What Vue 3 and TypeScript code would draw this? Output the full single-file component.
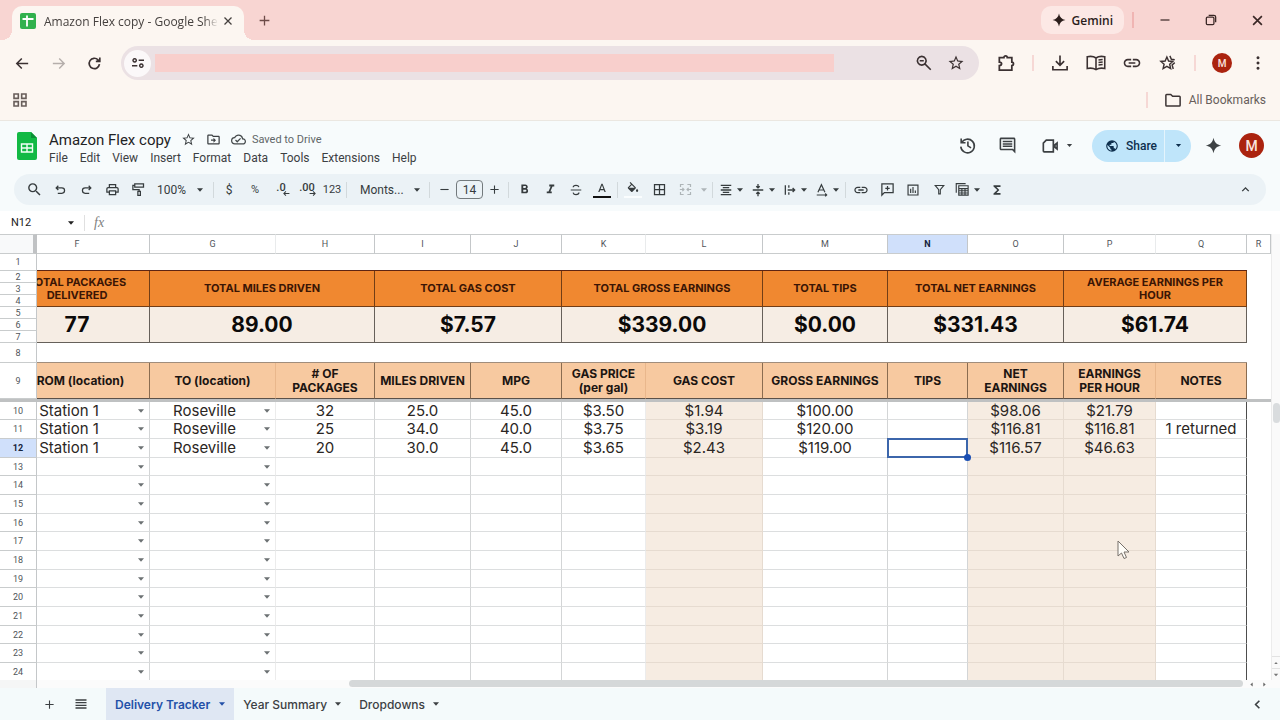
<script setup lang="ts">
import { h, ref } from 'vue'

interface Glyph { d: string; s?: number }

const glyphs: Record<string, Glyph> = {
  back: { d: 'M20 12H4M11 5l-7 7 7 7', s: 2.2 },
  forward: { d: 'M4 12h16M13 5l7 7-7 7', s: 2 },
  reload: { d: 'M19 13a7.3 7.3 0 1 1-2-6.200L19 8.600M19.500 3.500v5.600h-5.600', s: 2.4 },
  tune: { d: 'M7 5.500a2.500 2.500 0 1 0 .01 0zM13 8h8M3 16h8M17 13.500a2.500 2.500 0 1 0 .01 0z', s: 2.2 },
  grid: { d: 'M3 3h6.500v6.500H3zM14.500 3H21v6.500h-6.500zM3 14.500h6.500V21H3zM14.500 14.500H21V21h-6.500z', s: 2.4 },
  close: { d: 'M5 5l14 14M19 5L5 19', s: 2.6 },
  plus: { d: 'M12 3v18M3 12h18', s: 2.4 },
  minus: { d: 'M3 12h18', s: 2.4 },
  restore: { d: 'M4 9a2 2 0 0 1 2-2h9a2 2 0 0 1 2 2v9a2 2 0 0 1-2 2H6a2 2 0 0 1-2-2zM8 4h9a3 3 0 0 1 3 3v9', s: 2.2 },
  spark: { d: 'M12 1c1.200 6.500 4.500 9.800 11 11-6.500 1.200-9.800 4.500-11 11-1.200-6.500-4.500-9.800-11-11 6.500-1.200 9.800-4.500 11-11z' },
  search: { d: 'M15.500 14h-.79l-.28-.27A6.470 6.470 0 0 0 16 9.500 6.500 6.500 0 1 0 9.500 16c1.610 0 3.090-.59 4.230-1.570l.27.28v.79l5 4.990L20.490 19l-4.990-5zm-6 0C7.010 14 5 11.990 5 9.500S7.010 5 9.500 5 14 7.010 14 9.500 11.990 14 9.500 14z' },
  zoomOut: { d: 'M13.500 13.500L21 21M9 3.200a5.800 5.800 0 1 0 .01 0zM6.300 9h5.400', s: 2.1 },
  star: { d: 'M22 9.240l-7.190-.62L12 2 9.190 8.630 2 9.240l5.460 4.730L5.820 21 12 17.270 18.180 21l-1.630-7.030L22 9.240zM12 15.400l-3.760 2.270 1-4.280-3.320-2.880 4.380-.38L12 6.100l1.710 4.040 4.380.38-3.320 2.880 1 4.280L12 15.400z' },
  starPen: { d: 'M10.500 4l2.300 5.400 5.700.5-4.300 3.800 1.300 5.700-5-3-5 3 1.300-5.700L2.500 9.900l5.700-.5zM14.500 2.500l2 4.500 4.500.5M21 11.500l-3.500 3 1.500 5.500', s: 1.900 },
  puzzle: { d: 'M4 5.500h5.500a2 2 0 1 1 4 0H19V11a2 2 0 1 1 0 4v5.500H4V15c3.600 0 3.600-4 0-4z', s: 2.1 },
  download: { d: 'M12 2v13M6.500 9.500L12 15l5.500-5.500M2.500 16v5h19v-5', s: 2.2 },
  book: { d: 'M12 6C9 3.800 5 3.800 1.500 4.500v14C5 17.800 9 18 12 20c3-2 7-2.200 10.500-1.500v-14C19 3.800 15 3.800 12 6zM12 6v14M15 8.500l5-.6M15 11.500l5-.6M15 14.500l5-.6', s: 1.900 },
  link: { d: 'M3.900 12c0-1.710 1.390-3.100 3.100-3.100h4V7H7c-2.760 0-5 2.240-5 5s2.240 5 5 5h4v-1.900H7c-1.710 0-3.100-1.390-3.100-3.100zM8 13h8v-2H8v2zm9-6h-4v1.900h4c1.710 0 3.100 1.390 3.100 3.100s-1.390 3.100-3.100 3.100h-4V17h4c2.760 0 5-2.240 5-5s-2.240-5-5-5z' },
  dots: { d: 'M12 3a2 2 0 1 0 .01 0zM12 10a2 2 0 1 0 .01 0zM12 17a2 2 0 1 0 .01 0z' },
  folder: { d: 'M2.500 5.500a1 1 0 0 1 1-1H9L11.500 7h9a1 1 0 0 1 1 1v11a1 1 0 0 1-1 1h-17a1 1 0 0 1-1-1z', s: 2 },
  folderMove: { d: 'M20 6h-8l-2-2H4c-1.100 0-2 .9-2 2v12c0 1.100.9 2 2 2h16c1.100 0 2-.9 2-2V8c0-1.100-.9-2-2-2zm0 12H4V6h5.170l2 2H20v10zM12 17l4-4-4-4v3H8v2h4z' },
  cloud: { d: 'M19.350 10.040A7.490 7.490 0 0 0 12 4C9.110 4 6.600 5.640 5.350 8.040A5.994 5.994 0 0 0 0 14c0 3.310 2.690 6 6 6h13c2.760 0 5-2.240 5-5 0-2.640-2.050-4.780-4.650-4.960zM19 18H6c-2.210 0-4-1.790-4-4 0-2.050 1.530-3.760 3.560-3.970l1.070-.11.5-.95A5.469 5.469 0 0 1 12 6c2.620 0 4.880 1.860 5.390 4.430l.3 1.500 1.530.11A2.980 2.980 0 0 1 22 15c0 1.650-1.350 3-3 3zm-9-3.820l-2.090-2.090L6.500 13.500 10 17l6.010-6.010-1.410-1.410z' },
  history: { d: 'M4 3v5.500h5.500M4.500 8.500a8.600 8.600 0 1 1-1 5M12.500 7v5.500l4 2.500', s: 2 },
  comment: { d: 'M22 4c0-1.100-.9-2-2-2H4c-1.100 0-2 .9-2 2v12c0 1.100.9 2 2 2h14l4 4V4zm-2 13.170L18.830 16H4V4h16v13.170zM6 12h12v2H6zm0-3h12v2H6zm0-3h12v2H6z' },
  meet: { d: 'M7.500 5H16v14H5a1 1 0 0 1-1-1V8.500zM18 10.500L20.500 8.500v7L18 13.500z', s: 2 },
  globe: { d: 'M12 2a10 10 0 1 0 0 20 10 10 0 0 0 0-20zm-1 17.930A8 8 0 0 1 4.210 10.210L9 15v1a2 2 0 0 0 2 2v1.930zm6.900-2.540A2 2 0 0 0 16 16h-1v-3a1 1 0 0 0-1-1H8v-2h2a1 1 0 0 0 1-1V7h2a2 2 0 0 0 2-2v-.41a8 8 0 0 1 2.900 12.800z' },
  undo: { d: 'M8 5L4 9l4 4M4 9h10.500a5 5 0 0 1 0 10H7', s: 2.3 },
  redo: { d: 'M16 5l4 4-4 4M20 9H9.500a5 5 0 0 0 0 10H17', s: 2.3 },
  print: { d: 'M19 8h-1V3H6v5H5c-1.660 0-3 1.340-3 3v6h4v4h12v-4h4v-6c0-1.660-1.340-3-3-3zM8 5h8v3H8V5zm8 12v2H8v-4h8v2zm2-2v-2H6v2H4v-4c0-.55.45-1 1-1h14c.55 0 1 .45 1 1v4h-2z' },
  roller: { d: 'M6 3h14v5H6zM6 5.500H3V12h10v3M11 15h4v6.500h-4z', s: 2 },
  bold: { d: 'M15.600 10.790c.97-.67 1.650-1.770 1.650-2.790 0-2.260-1.750-4-4-4H7v14h7.040c2.090 0 3.710-1.700 3.710-3.790 0-1.520-.86-2.820-2.150-3.420zM10 6.500h3c.83 0 1.500.67 1.500 1.500s-.67 1.500-1.500 1.500h-3v-3zm3.500 9H10v-3h3.500c.83 0 1.500.67 1.500 1.500s-.67 1.500-1.500 1.500z' },
  italic: { d: 'M10 4v3h2.210l-3.420 8H6v3h8v-3h-2.210l3.420-8H18V4z' },
  strike: { d: 'M3 12h18M17 7c-.6-2-2.500-3-5-3-2.700 0-4.800 1.200-4.800 3.300M7 16.500c.6 2.300 2.500 3.500 5 3.500 2.800 0 5-1.300 5-3.600', s: 2.1 },
  textColor: { d: 'M11 3L5.500 17h2.250l1.120-3h6.250l1.120 3h2.250L13 3h-2zm-1.380 9L12 5.670 14.380 12H9.620z' },
  fill: { d: 'M16.560 8.940L7.620 0 6.210 1.410l2.380 2.380-5.150 5.150a1.490 1.490 0 0 0 0 2.120l5.500 5.500c.29.29.68.44 1.060.44s.77-.15 1.060-.44l5.500-5.500c.59-.58.59-1.530 0-2.120zM5.210 10L10 5.210 14.790 10H5.210zM19 11.500s-2 2.170-2 3.500a2 2 0 0 0 4 0c0-1.330-2-3.500-2-3.500z' },
  borders: { d: 'M3 3v18h18V3H3zm8 16H5v-6h6v6zm0-8H5V5h6v6zm8 8h-6v-6h6v6zm0-8h-6V5h6v6z' },
  merge: { d: 'M9 4H4v4M15 4h5v4M9 20H4v-4M15 20h5v-4M3 12h6M7 9.500L9.500 12 7 14.500M21 12h-6M17 9.500L14.500 12l2.500 2.500', s: 1.900 },
  align: { d: 'M3 4h18M6.500 8h11M3 12h18M6.500 16h11M3 20h18', s: 2.2 },
  valign: { d: 'M3 12h18M12 1.500v6M9 5.500l3 3 3-3M12 22.500v-6M9 18.500l3-3 3 3', s: 2.2 },
  wrap: { d: 'M4 4v16M10 4v4M10 16v4M8 12h12M16.500 8.500L20 12l-3.500 3.500', s: 2.2 },
  rotate: { d: 'M5 16l6-13 6 13M7.500 12h7M3 20.500h17M17.500 18l2.500 2.500-2.500 2.500', s: 2 },
  addComment: { d: 'M3 3h18v14H7l-4 4zM12 6.500v7M8.500 10h7', s: 2 },
  chart: { d: 'M3.500 3.500h17v17h-17zM8 17v-7M12 17V7M16 17v-4', s: 2 },
  filter: { d: 'M4 4.500h16l-6.500 8V20h-3v-7.500z', s: 2 },
  tableViews: { d: 'M2 17V2.500h15M6 6h15v15H6zM6 10.500h15M6 14h15M6 17.500h15M11 10.500V21M16 10.500V21', s: 1.800 },
  sigma: { d: 'M18 4H6v2l6.500 6L6 18v2h12v-3h-7l5-5-5-5h7z' },
  up: { d: 'M6 15l6-6 6 6', s: 2.600 },
  left: { d: 'M15 6l-6 6 6 6', s: 2.600 },
  caret: { d: 'M3 7l9 10 9-10z' },
  caretUp: { d: 'M5 16l7-8 7 8z' },
  caretLeft: { d: 'M16 5l-8 7 8 7z' },
  caretRight: { d: 'M8 5l8 7-8 7z' },
  lines: { d: 'M1 4h22M1 9.300h22M1 14.700h22M1 20h22', s: 2.600 },
  arrowLeft: { d: 'M22 12H4M10 5l-7 7 7 7', s: 3.500 },
  arrowRight: { d: 'M2 12h18M14 5l7 7-7 7', s: 3.500 },
}

const Icon = (p: { n: string; size?: number }) => {
  const g = glyphs[p.n]
  const size = p.size ?? 16
  return h('svg', { width: size, height: size, viewBox: '0 0 24 24', 'aria-hidden': 'true' }, [
    g.s
      ? h('path', { d: g.d, fill: 'none', stroke: 'currentColor', 'stroke-width': g.s })
      : h('path', { d: g.d, fill: 'currentColor', 'fill-rule': 'evenodd' }),
  ])
}
Icon.props = ['n', 'size']

const menus = ['File', 'Edit', 'View', 'Insert', 'Format', 'Data', 'Tools', 'Extensions', 'Help']
const columns = [
  { id: 'F', w: 113 }, { id: 'G', w: 126 }, { id: 'H', w: 99 }, { id: 'I', w: 96 },
  { id: 'J', w: 91 }, { id: 'K', w: 84 }, { id: 'L', w: 117 }, { id: 'M', w: 125 },
  { id: 'N', w: 80 }, { id: 'O', w: 96 }, { id: 'P', w: 92 }, { id: 'Q', w: 91 }, { id: 'R', w: 24 },
]
const summary = [
  { label: 'TOTAL PACKAGES DELIVERED', value: '77', span: 1 },
  { label: 'TOTAL MILES DRIVEN', value: '89.00', span: 2 },
  { label: 'TOTAL GAS COST', value: '$7.57', span: 2 },
  { label: 'TOTAL GROSS EARNINGS', value: '$339.00', span: 2 },
  { label: 'TOTAL TIPS', value: '$0.00', span: 1 },
  { label: 'TOTAL NET EARNINGS', value: '$331.43', span: 2 },
  { label: 'AVERAGE EARNINGS PER HOUR', value: '$61.74', span: 2 },
]
const heads = ['FROM (location)', 'TO (location)', '# OF\nPACKAGES', 'MILES DRIVEN', 'MPG', 'GAS PRICE\n(per gal)', 'GAS COST', 'GROSS EARNINGS', 'TIPS', 'NET\nEARNINGS', 'EARNINGS\nPER HOUR', 'NOTES']
const filled: string[][] = [
  ['Station 1', 'Roseville', '32', '25.0', '45.0', '$3.50', '$1.94', '$100.00', '', '$98.06', '$21.79', ''],
  ['Station 1', 'Roseville', '25', '34.0', '40.0', '$3.75', '$3.19', '$120.00', '', '$116.81', '$116.81', '1 returned'],
  ['Station 1', 'Roseville', '20', '30.0', '45.0', '$3.65', '$2.43', '$119.00', '', '$116.57', '$46.63', ''],
]
const rows = Array.from({ length: 15 }, (_, i) => ({
  n: i + 10,
  cells: filled[i] ?? Array<string>(12).fill(''),
}))
const soft = [1, 5, 10]
const nameBox = ref('N12')
const fontSize = ref('14')
const address = ref('')
const formula = ref('')
</script>

<template>
  <div class="window">
    <header class="tabstrip">
      <div class="tab">
        <svg class="fav" viewBox="0 0 16 16" aria-hidden="true"><rect width="16" height="16" rx="2" fill="#31b14d" /><path d="M7 2.500v11M2.500 6h11" stroke="#fff" stroke-width="1.800" /></svg>
        <span class="tab-title">Amazon Flex copy - Google Sheets</span>
        <button aria-label="Close tab"><Icon n="close" :size="12" /></button>
      </div>
      <button class="newtab" aria-label="New tab"><Icon n="plus" :size="13" /></button>
      <span class="grow"></span>
      <button class="gemini"><Icon n="spark" :size="14" />Gemini</button>
      <span class="pink-sep"></span>
      <button class="win" aria-label="Minimize"><Icon n="minus" :size="12" /></button>
      <button class="win" aria-label="Restore"><Icon n="restore" :size="14" /></button>
      <button class="win" aria-label="Close"><Icon n="close" :size="15" /></button>
    </header>

    <nav class="nav">
      <button class="slot" aria-label="Back"><Icon n="back" :size="17" /></button>
      <button class="slot dim" aria-label="Forward"><Icon n="forward" :size="17" /></button>
      <button class="slot" aria-label="Reload"><Icon n="reload" :size="17" /></button>
      <div class="omnibox">
        <button class="site" aria-label="Site information"><Icon n="tune" /></button>
        <input v-model="address" class="address" aria-label="Address" />
        <button class="omni-btn" aria-label="Zoom"><Icon n="zoomOut" :size="18" /></button>
        <button class="omni-btn" aria-label="Bookmark"><Icon n="star" :size="18" /></button>
      </div>
      <button class="slot" aria-label="Browser extensions"><Icon n="puzzle" :size="20" /></button>
      <span class="pink-sep"></span>
      <button class="slot" aria-label="Downloads"><Icon n="download" :size="18" /></button>
      <button class="slot" aria-label="Reading list"><Icon n="book" :size="20" /></button>
      <button class="slot" aria-label="Copy link"><Icon n="link" :size="20" /></button>
      <button class="slot" aria-label="Bookmarks"><Icon n="starPen" :size="18" /></button>
      <span class="pink-sep"></span>
      <button class="slot" aria-label="Profile"><span class="avatar small">M</span></button>
      <button class="slot" aria-label="Browser menu"><Icon n="dots" :size="18" /></button>
    </nav>

    <div class="bookmarks">
      <button aria-label="Apps"><Icon n="grid" :size="16" /></button>
      <span class="grow"></span>
      <span class="pink-sep"></span>
      <button class="all"><Icon n="folder" :size="18" />All Bookmarks</button>
    </div>

    <section class="app-head">
      <svg class="logo" viewBox="0 0 20 28" aria-hidden="true">
        <path d="M2 0h12l6 6v20a2 2 0 0 1-2 2H2a2 2 0 0 1-2-2V2a2 2 0 0 1 2-2z" fill="#12b944" />
        <path d="M14 0l6 6h-6z" fill="#0a8f35" />
        <path d="M4.500 12h11v8h-11zM10 12v8M4.500 16h11" fill="none" stroke="#f2fff5" stroke-width="1.400" />
      </svg>
      <div class="doc">
        <div class="title-row">
          <h1>Amazon Flex copy</h1>
          <button aria-label="Star"><Icon n="star" :size="15" /></button>
          <button aria-label="Move"><Icon n="folderMove" :size="15" /></button>
          <span class="saved"><Icon n="cloud" :size="15" />Saved to Drive</span>
        </div>
        <div class="menus"><button v-for="m in menus" :key="m">{{ m }}</button></div>
      </div>
      <span class="grow"></span>
      <button class="head-btn" aria-label="Version history"><Icon n="history" :size="19" /></button>
      <button class="head-btn" aria-label="Comments"><Icon n="comment" :size="19" /></button>
      <button class="head-btn meet" aria-label="Meet"><Icon n="meet" :size="20" /><Icon n="caret" :size="7" /></button>
      <div class="share">
        <button class="share-main"><Icon n="globe" :size="14" />Share</button>
        <button class="share-more" aria-label="Share options"><Icon n="caret" :size="7" /></button>
      </div>
      <button class="gem" aria-label="Ask Gemini"><Icon n="spark" :size="17" /></button>
      <button aria-label="Account"><span class="avatar">M</span></button>
    </section>

    <div class="toolbar-wrap">
      <section class="toolbar">
        <button class="t" aria-label="Search"><Icon n="search" :size="17" /></button>
        <button class="t" aria-label="Undo"><Icon n="undo" :size="13" /></button>
        <button class="t" aria-label="Redo"><Icon n="redo" :size="13" /></button>
        <button class="t" aria-label="Print"><Icon n="print" :size="15" /></button>
        <button class="t" aria-label="Paint format"><Icon n="roller" :size="15" /></button>
        <label class="pick zoom"><select aria-label="Zoom level"><option>100%</option></select><Icon n="caret" :size="8" /></label>
        <i class="sep"></i>
        <button class="t">$</button>
        <button class="t num">%</button>
        <button class="t dec" aria-label="Decrease decimal places"><span>.0</span><Icon n="arrowLeft" :size="7" /></button>
        <button class="t dec" aria-label="Increase decimal places"><span>.00</span><Icon n="arrowRight" :size="7" /></button>
        <button class="t narrow num">123</button>
        <i class="sep"></i>
        <label class="pick font"><select aria-label="Font"><option>Monts...</option></select><Icon n="caret" :size="8" /></label>
        <i class="sep"></i>
        <button class="t narrow" aria-label="Decrease font size"><Icon n="minus" :size="11" /></button>
        <input v-model="fontSize" class="size" aria-label="Font size" />
        <button class="t narrow" aria-label="Increase font size"><Icon n="plus" :size="11" /></button>
        <i class="sep"></i>
        <button class="t" aria-label="Bold"><Icon n="bold" :size="15" /></button>
        <button class="t" aria-label="Italic"><Icon n="italic" :size="15" /></button>
        <button class="t" aria-label="Strikethrough"><Icon n="strike" :size="14" /></button>
        <button class="t under" aria-label="Text color"><Icon n="textColor" :size="14" /></button>
        <i class="sep"></i>
        <button class="t under white" aria-label="Fill color"><Icon n="fill" :size="14" /></button>
        <button class="t" aria-label="Borders"><Icon n="borders" :size="15" /></button>
        <button class="t faded" aria-label="Merge cells"><Icon n="merge" :size="15" /></button>
        <button class="c faded" aria-label="Merge options"><Icon n="caret" :size="8" /></button>
        <i class="sep"></i>
        <button class="duo" aria-label="Horizontal align"><Icon n="align" :size="14" /><Icon n="caret" :size="8" /></button>
        <button class="duo" aria-label="Vertical align"><Icon n="valign" :size="14" /><Icon n="caret" :size="8" /></button>
        <button class="duo" aria-label="Text wrapping"><Icon n="wrap" :size="14" /><Icon n="caret" :size="8" /></button>
        <button class="duo" aria-label="Text rotation"><Icon n="rotate" :size="14" /><Icon n="caret" :size="8" /></button>
        <i class="sep"></i>
        <button class="t" aria-label="Insert link"><Icon n="link" /></button>
        <button class="t" aria-label="Insert comment"><Icon n="addComment" :size="15" /></button>
        <button class="t" aria-label="Insert chart"><Icon n="chart" :size="14" /></button>
        <button class="t" aria-label="Create a filter"><Icon n="filter" :size="13" /></button>
        <button class="duo" aria-label="Table views"><Icon n="tableViews" :size="15" /><Icon n="caret" :size="8" /></button>
        <button class="t" aria-label="Functions"><Icon n="sigma" :size="14" /></button>
        <span class="grow"></span>
        <button class="t" aria-label="Hide the menus"><Icon n="up" :size="13" /></button>
      </section>
    </div>

    <section class="formula">
      <label class="namebox"><input v-model="nameBox" aria-label="Name box" /><Icon n="caret" :size="8" /></label>
      <span class="fx">fx</span>
      <input v-model="formula" class="fx-input" aria-label="Formula" />
    </section>

    <main class="sheet">
      <div class="pane">
        <table>
          <colgroup>
            <col class="gutter" />
            <col v-for="c in columns" :key="c.id" :style="{ width: c.w + 'px' }" />
          </colgroup>
          <thead>
            <tr class="letters">
              <th class="corner"></th>
              <th v-for="(c, i) in columns" :key="c.id" scope="col" :class="{ on: c.id === 'N', soft: soft.includes(i) }"><div :class="{ shift: i === 0 }">{{ c.id }}</div></th>
            </tr>
          </thead>
          <tbody class="frozen">
            <tr class="r1"><th scope="row">1</th><td colspan="12" class="line"></td><td></td></tr>
            <tr class="thin">
              <th scope="row">2</th>
              <td v-for="(s, i) in summary" :key="s.label" :colspan="s.span" rowspan="3" class="sum-label"><div :class="{ shift: i === 0 }">{{ s.label }}</div></td>
              <td></td>
            </tr>
            <tr class="thin"><th scope="row">3</th><td></td></tr>
            <tr class="thin"><th scope="row">4</th><td></td></tr>
            <tr class="thin">
              <th scope="row">5</th>
              <td v-for="(s, i) in summary" :key="s.label" :colspan="s.span" rowspan="3" class="sum-value"><div :class="{ shift: i === 0 }">{{ s.value }}</div></td>
              <td></td>
            </tr>
            <tr class="thin"><th scope="row">6</th><td></td></tr>
            <tr class="thin"><th scope="row">7</th><td></td></tr>
            <tr class="r8"><th scope="row">8</th><td colspan="12" class="line"></td><td></td></tr>
            <tr class="r9">
              <th scope="row">9</th>
              <td v-for="(t, i) in heads" :key="t" class="head" :class="{ soft: soft.includes(i) }"><div :class="{ shift: i === 0 }">{{ t }}</div></td>
              <td></td>
            </tr>
            <tr class="freeze" aria-hidden="true"><td colspan="14"></td></tr>
          </tbody>
          <tbody class="body">
            <tr v-for="r in rows" :key="r.n" :class="{ current: r.n === 12 }">
              <th scope="row">{{ r.n }}</th>
              <td
                v-for="(v, i) in r.cells"
                :key="i"
                :class="{ soft: soft.includes(i), tint: i === 6 || i === 9 || i === 10, last: i === 11, active: r.n === 12 && i === 8 }"
              >
                <label v-if="i < 2" class="drop" :class="{ shift: i === 0 }">
                  <select :aria-label="heads[i] + ' row ' + r.n"><option>{{ v }}</option></select>
                  <Icon n="caret" :size="8" />
                </label>
                <template v-else>{{ v }}</template>
              </td>
              <td class="off"></td>
            </tr>
          </tbody>
        </table>
      </div>
      <div class="vbar">
        <div class="vthumb"></div>
        <button aria-label="Scroll up"><Icon n="caretUp" :size="6" /></button>
        <button aria-label="Scroll down"><Icon n="caret" :size="6" /></button>
      </div>
      <div class="hbar">
        <div class="hcorner"></div>
        <div class="htrack"><div class="hthumb"></div></div>
        <button aria-label="Scroll left"><Icon n="caretLeft" :size="7" /></button>
        <button aria-label="Scroll right"><Icon n="caretRight" :size="7" /></button>
      </div>
    </main>

    <footer class="tabs">
      <button class="foot-icon" aria-label="Add sheet"><Icon n="plus" :size="11" /></button>
      <button class="foot-icon" aria-label="All sheets"><Icon n="lines" :size="12" /></button>
      <button class="sheet-tab selected">Delivery Tracker<Icon n="caret" :size="8" /></button>
      <button class="sheet-tab">Year Summary<Icon n="caret" :size="8" /></button>
      <button class="sheet-tab">Dropdowns<Icon n="caret" :size="8" /></button>
      <span class="grow"></span>
      <button class="foot-icon" aria-label="Show side panel"><Icon n="left" :size="15" /></button>
    </footer>

    <svg class="pointer" viewBox="0 0 14 20" aria-hidden="true"><path d="M1 1v15l3.500-3 2.500 5.500 2.500-1-2.500-5.500h5z" fill="#fffdf8" stroke="#77706a" /></svg>
  </div>
</template>

<style>
body { margin: 0; }
</style>

<style scoped>
.window { position: relative; display: flex; flex-direction: column; height: 100vh; min-height: 480px; overflow: hidden; background: #fcf6f1; color: #3c4043; font-family: Roboto, "Liberation Sans", sans-serif; font-size: 12px; }
.window * { box-sizing: border-box; }
button { display: inline-flex; align-items: center; justify-content: center; padding: 0; border: 0; background: none; color: inherit; font: inherit; }
input, select { min-width: 0; padding: 0; border: 0; border-radius: 0; outline: 0; background: none; color: inherit; font: inherit; }
select { appearance: none; }
svg { flex: none; display: block; }
.grow { flex: 1; }

.tabstrip { display: flex; align-items: center; flex: none; height: 40px; background: #f8d5d2; color: #3a2725; }
.tab { position: relative; display: flex; align-items: center; align-self: flex-end; width: 232px; height: 34px; margin-left: 12px; padding: 0 10px 4px 8px; border-radius: 10px 10px 0 0; background: #fcf6f1; font-family: "Open Sans", "Noto Sans", sans-serif; color: #45403e; }
.tab::before, .tab::after { content: ""; position: absolute; bottom: 0; width: 10px; height: 10px; background: radial-gradient(circle at 0 0, transparent 10px, #fcf6f1 10px); }
.tab::before { left: -10px; }
.tab::after { right: -10px; transform: scaleX(-1); }
.fav { width: 16px; height: 16px; margin-right: 8px; }
.tab-title { flex: 1; overflow: hidden; white-space: nowrap; margin-right: 4px; mask-image: linear-gradient(90deg, #000 92%, transparent); }
.newtab { width: 40px; height: 34px; color: #6d4b48; }
.gemini { gap: 6px; height: 28px; padding: 0 11px; border-radius: 10px; background: #fce8e5; color: #2b1d1b; font-family: "Open Sans", sans-serif; font-weight: 600; }
.pink-sep { flex: none; width: 2px; height: 16px; margin: 0 8px; background: #f6d8d5; }
.tabstrip .pink-sep { background: #f0b5b3; }
.win { width: 46px; height: 40px; }

.nav { display: flex; align-items: center; flex: none; height: 46px; padding: 0 4px; color: #3b3132; }
.slot { flex: none; width: 36px; height: 34px; }
.dim { color: #b5aeab; }
.omnibox { display: flex; align-items: center; flex: 1; height: 34px; margin: 0 9px; padding: 0 7px 0 3px; border-radius: 17px; background: #ebe1e4; }
.site { width: 27px; height: 27px; border-radius: 14px; background: #fbf8f9; }
.address { flex: 1; height: 18px; margin: 0 74px 0 4px; background: #f8cfcc; }
.omni-btn { width: 32px; height: 32px; }
.avatar { display: flex; align-items: center; justify-content: center; width: 25px; height: 25px; border-radius: 50%; background: #ab230f; color: #fbe4df; font-size: 14px; font-weight: 500; }
.avatar.small { width: 20px; height: 20px; font-size: 10px; }

.bookmarks { display: flex; align-items: center; flex: none; height: 34px; padding: 0 14px 6px 12px; color: #685e5b; }
.all { gap: 7px; margin-left: 8px; }
.all svg { color: #3c3434; }

.app-head { display: flex; align-items: center; flex: none; height: 54px; padding: 0 16px 4px 17px; border-top: 1px solid #ebe7e1; background: #f7fbfc; }
.logo { width: 20px; height: 28px; margin-right: 12px; }
.doc { padding-top: 4px; }
.title-row { display: flex; align-items: center; height: 20px; gap: 10px; }
h1 { margin: 0; font-size: 15px; line-height: 20px; font-weight: 400; color: #1f2325; }
.saved { display: flex; align-items: center; gap: 6px; font-size: 11px; color: #5f6668; }
.saved svg { color: #44494b; }
.menus { display: flex; gap: 12px; height: 16px; line-height: 16px; }
.head-btn { width: 40px; height: 40px; }
.meet { gap: 6px; width: 44px; margin: 0 14px 0 7px; }
.share { display: flex; height: 32px; border-radius: 16px; overflow: hidden; background: #bfe5fa; color: #0e2f4d; }
.share-main { gap: 7px; width: 73px; padding-left: 6px; border-right: 1px solid #e4f4fc; font-size: 12px; font-weight: 500; }
.share-more { width: 26px; }
.gem { width: 44px; margin-right: 4px; color: #3d4244; }

.toolbar-wrap { flex: none; padding: 0 14px 6px; background: #f7fbfc; }
.toolbar { display: flex; align-items: center; height: 31px; padding: 0 8px 0 7px; border-radius: 16px; background: #ebf2f6; color: #363c3e; }
.t { flex: none; width: 26px; height: 26px; }
.narrow { width: 24px; }
.num { font-size: 11px; }
.dec { flex-direction: column; align-items: center; font-size: 11px; line-height: 11px; font-weight: 500; }
.dec svg { align-self: flex-end; margin: -3px 4px 0 0; }
.sep { flex: none; width: 1px; height: 16px; margin: 0 2px; background: #d2d9dc; }
.pick { display: flex; align-items: center; }
.zoom { width: 60px; padding: 0 7px 0 6px; }
.font { width: 78px; padding: 0 6px 0 11px; }
.pick select { flex: 1; }
.size { width: 27px; height: 19px; border: 1px solid #737a7d; border-radius: 4px; text-align: center; font-size: 12px; }
.size + .narrow { width: 23px; }
.under { flex-direction: column; }
.under::after { content: ""; width: 18px; height: 2px; background: #111; }
.under.white::after { background: #fafdfe; }
.faded { color: #aeb5b8; }
.c { width: 12px; height: 26px; }
.duo { gap: 3px; width: 32px; height: 26px; }

.formula { display: flex; align-items: center; flex: none; height: 23px; background: #fff; }
.namebox { display: flex; align-items: center; width: 85px; height: 16px; padding: 0 9px 0 11px; border-right: 1px solid #e0e0e0; font-size: 11px; color: #222; }
.namebox input { flex: 1; }
.fx { margin-left: 9px; font-family: "Liberation Serif", serif; font-style: italic; font-size: 14px; color: #808080; }
.fx-input { flex: 1; margin-left: 8px; }

.sheet { display: grid; grid-template-columns: minmax(0, 1fr) 9px; grid-template-rows: minmax(0, 1fr) 8px; flex: 1; min-height: 0; background: #fff; }
.pane { overflow: hidden; }
table { width: 100%; table-layout: fixed; border-collapse: separate; border-spacing: 0; color: #2b2623; font-family: Inter, "Open Sans", sans-serif; }
.gutter { width: 37px; }
th, td { padding: 0; overflow: hidden; text-align: center; vertical-align: middle; }
th { border-right: 1px solid #c4c7c9; border-bottom: 1px solid #c9cccd; background: #fff; color: #50555a; font-family: Roboto, "Liberation Sans", sans-serif; font-size: 9px; line-height: 10px; font-weight: 400; }
.shift { margin-left: -32px; }
.letters th { height: 20px; border-top: 1px solid #c9cccd; }
.letters th.soft { border-right-color: #e9ebec; }
.letters .corner { background: #f8f9fa; border-right: 4px solid #c0c2c4; }
.letters .on { background: #d0e0fb; color: #14223c; font-weight: 700; }
.r1 > * { height: 17px; }
.r1 .line { border-bottom: 1px solid #5e2412; }
.thin > * { height: 12px; }
.r8 > * { height: 20px; }
.r8 .line { border-bottom: 1px solid #a08d7c; }
.r9 > * { height: 36px; }
.sum-label { border-right: 1px solid #713d16; border-bottom: 1px solid #713d16; background: #f08830; font-size: 11px; line-height: 13px; font-weight: 700; color: #3a1505; }
.sum-label div:not(.shift) { padding: 0 12px; }
.sum-value { border-right: 1px solid #66605a; border-bottom: 1px solid #66605a; background: #f6ede4; font-size: 21px; line-height: 26px; font-weight: 700; color: #0c0a09; }
.head { border-right: 1px solid #8a6c50; border-bottom: 1px solid #5b5149; background: #f7c9a0; font-size: 12px; line-height: 14px; font-weight: 700; color: #1c1512; white-space: pre-line; }
.head.soft { border-right-color: #e9b78c; }
.freeze td { height: 3px; background: #bfc1c2; }
.body th, .body td { height: 19px; }
.body tr:nth-child(3n + 1) > * { height: 18px; }
.body td { border-right: 1px solid #d3d5d6; border-bottom: 1px solid #dcdedf; font-size: 15px; line-height: 16px; white-space: nowrap; }
.body td.soft { border-right-color: #ececec; }
.body td.tint { background: #f6ece2; border-color: #e6dbd0; }
.body td.last { border-right-color: #4d4d4d; }
.body td.off { border: 0; }
.body .current th { background: #d0e0fb; color: #14223c; font-weight: 700; }
.body td.active { position: relative; overflow: visible; }
.active::before { content: ""; position: absolute; inset: -1px; border: 2px solid #3c66ab; }
.active::after { content: ""; position: absolute; right: -4px; bottom: -4px; width: 7px; height: 7px; border-radius: 50%; background: #1a4fb4; }
.drop { display: flex; align-items: center; height: 16px; padding-right: 4px; }
.drop select { flex: 1; text-align-last: center; height: 16px; margin-right: 4px; line-height: 16px; }
.drop svg { color: #6b7072; }

.vbar { display: flex; flex-direction: column; border-left: 1px solid #ececec; background: #fafafa; }
.vthumb { height: 20px; margin: 169px 0 auto 1px; border-radius: 4px; background: #d9dcde; }
.vbar button { height: 12px; color: #777; border-top: 1px solid #e2e2e2; }
.hbar { display: flex; grid-column: 1 / -1; background: #fbfbfb; }
.hcorner { width: 37px; background: #f5f6f6; border-right: 1px solid #c4c7c9; }
.htrack { flex: 1; padding: 0 2px 0 24.4%; }
.hthumb { height: 7px; border-radius: 4px; background: #d5d8d9; }
.hbar button { width: 13px; color: #666; }
.hbar button:last-child { margin-right: 9px; }

.tabs { display: flex; align-items: center; flex: none; height: 32px; padding: 0 7px 0 33px; background: #f4fafb; font-family: Inter, Roboto, sans-serif; }
.foot-icon { width: 32px; height: 32px; }
.foot-icon + .foot-icon { margin-right: 9px; }
.sheet-tab { gap: 8px; height: 32px; padding: 0 8px 0 9px; font-size: 12px; font-weight: 500; }
.sheet-tab + .sheet-tab { gap: 7px; }
.selected { background: #dfe7f3; color: #2350a8; font-weight: 600; }
.pointer { position: absolute; left: 1117px; top: 540px; width: 14px; height: 20px; }
</style>
